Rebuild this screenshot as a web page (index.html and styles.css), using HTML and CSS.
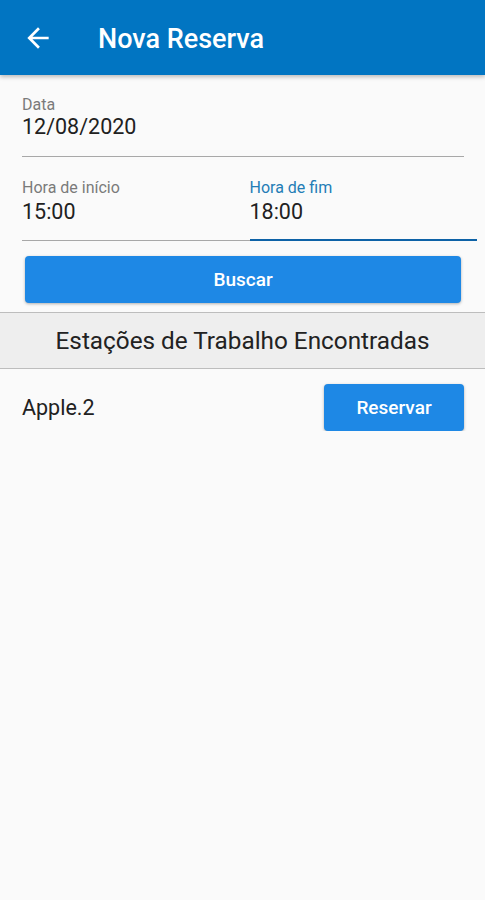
FILE: index.html
```html
<!DOCTYPE html>
<html lang="pt">
<head>
    <meta charset="UTF-8">
    <meta name="viewport" content="width=device-width, initial-scale=1.0">
    <title>Nova Reserva</title>
    <link rel="stylesheet" href="styles.css">
</head>
<body>
    <header class="appbar">
        <button class="back-btn" aria-label="Voltar">
            <svg viewBox="0 0 24 24" width="32" height="32">
                <path d="M20 11H7.83l5.59-5.59L12 4l-8 8 8 8 1.41-1.41L7.83 13H20v-2z" fill="#fff"/>
            </svg>
        </button>
        <h1 class="title">Nova Reserva</h1>
    </header>

    <div class="form">
        <div class="field field-date">
            <span class="field-label">Data</span>
            <span class="field-value">12/08/2020</span>
        </div>
        <div class="field-row">
            <div class="field">
                <span class="field-label">Hora de início</span>
                <span class="field-value">15:00</span>
            </div>
            <div class="field focused">
                <span class="field-label">Hora de fim</span>
                <span class="field-value">18:00</span>
            </div>
        </div>
        <button class="btn btn-search">Buscar</button>
    </div>

    <div class="section-title">Estações de Trabalho Encontradas</div>

    <ul class="results">
        <li class="result">
            <span class="result-name">Apple.2</span>
            <button class="btn btn-reserve">Reservar</button>
        </li>
    </ul>
</body>
</html>
```

FILE: styles.css
```css
body {
    font-family: Roboto, "Liberation Sans", sans-serif;
    background-color: #fafafa;
    color: #212121;
    margin: 0;
    padding: 0;
}
.appbar {
    height: 75px;
    background-color: #0175c2;
    display: flex;
    align-items: center;
    padding-left: 22px;
    box-shadow: 0 2px 4px rgba(0, 0, 0, 0.25);
}
.back-btn {
    width: 32px;
    height: 32px;
    padding: 0;
    border: none;
    background: none;
    display: flex;
}
.title {
    margin: 2px 0 0 44px;
    color: #fff;
    font-size: 27px;
    font-weight: 500;
}
.form {
    padding-top: 20px;
}
.field {
    display: flex;
    flex-direction: column;
    padding-bottom: 16px;
    border-bottom: 1px solid #a8a8a8;
}
.field-date {
    margin: 0 21px 0 22px;
}
.field-label {
    font-size: 16px;
    line-height: 19px;
    color: #7a7a7a;
}
.field-value {
    font-size: 21.5px;
    line-height: 26px;
    color: #212121;
}
.field-row {
    display: flex;
    margin: 21px 8px 0 22px;
}
.field-row .field {
    flex: 1;
    padding-bottom: 15px;
}
.field-row .field-value {
    margin-top: 2px;
}
.field.focused {
    border-bottom: 2px solid #0d62a6;
    padding-bottom: 14px;
}
.field.focused .field-label {
    color: #237db6;
}
.btn {
    border: none;
    border-radius: 4px;
    background-color: #1e88e5;
    color: #fff;
    font-family: Roboto, "Liberation Sans", sans-serif;
    font-size: 19px;
    font-weight: 500;
    height: 47px;
    box-shadow: 0 1px 3px rgba(0, 0, 0, 0.3);
    cursor: pointer;
}
.btn-search {
    display: block;
    width: 436px;
    margin: 15px 0 0 25px;
}
.section-title {
    margin-top: 9px;
    height: 55px;
    display: flex;
    align-items: center;
    justify-content: center;
    background-color: #eeeeee;
    border-top: 1px solid #bdbdbd;
    border-bottom: 1px solid #bdbdbd;
    font-size: 24.3px;
    color: #222;
}
.results {
    list-style: none;
    margin: 0;
    padding: 0;
}
.result {
    display: flex;
    align-items: center;
    justify-content: space-between;
    padding: 15px 21px 0 22px;
}
.result-name {
    font-size: 21.5px;
}
.btn-reserve {
    width: 140px;
}
```
